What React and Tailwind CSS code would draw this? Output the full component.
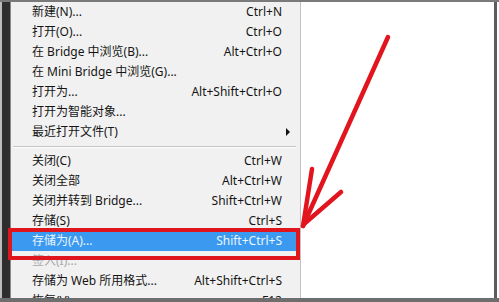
import React from 'react';

const items = [
    { label: '新建(N)...', key: 'Ctrl+N' },
    { label: '打开(O)...', key: 'Ctrl+O' },
    { label: '在 Bridge 中浏览(B)...', key: 'Alt+Ctrl+O' },
    { label: '在 Mini Bridge 中浏览(G)...', key: '' },
    { label: '打开为...', key: 'Alt+Shift+Ctrl+O' },
    { label: '打开为智能对象...', key: '' },
    { label: '最近打开文件(T)', key: '', sub: true },
    { sep: true },
    { label: '关闭(C)', key: 'Ctrl+W' },
    { label: '关闭全部', key: 'Alt+Ctrl+W' },
    { label: '关闭并转到 Bridge...', key: 'Shift+Ctrl+W' },
    { label: '存储(S)', key: 'Ctrl+S' },
    { label: '存储为(A)...', key: 'Shift+Ctrl+S', active: true },
    { label: '签入(I)...', key: '', disabled: true },
    { label: '存储为 Web 所用格式...', key: 'Alt+Shift+Ctrl+S' },
    { label: '恢复(V)', key: 'F12' },
];

const MenuRow = ({ item }) => {
    if (item.sep) {
        return (
            <div className="h-[9px] shrink-0 flex flex-col justify-center pl-[2px] pr-[4px]">
                <div className="h-px bg-[#c4c4c4]" />
                <div className="h-px bg-white" />
            </div>
        );
    }
    const color = item.active ? 'text-[#eaf5ff]' : item.disabled ? 'text-[#a9a9a9]' : 'text-[#151515]';
    return (
        <div
            className={`h-[20px] shrink-0 flex items-center justify-between pl-[21px] pr-[18px] ${item.active ? 'bg-[#3b9af0]' : ''} ${color}`}
        >
            <span>{item.label}</span>
            {item.sub ? (
                <span className="mr-[-8px] w-0 h-0 border-y-[4px] border-y-transparent border-l-[4px] border-l-[#111]" />
            ) : (
                <span>{item.key}</span>
            )}
        </div>
    );
};

export default function App() {
    return (
        <div
            className="relative w-[499px] h-[302px] overflow-hidden bg-white flex flex-col text-[12px]"
            style={{ fontFamily: '"Noto Sans", "Noto Sans CJK SC", sans-serif' }}
        >
            {/* top frame */}
            <div className="h-[2px] shrink-0 bg-[#7a7a7a]" />

            <div className="flex flex-1 min-h-0">
                {/* left frame strips */}
                <div className="w-[2px] bg-[#bdbdbd]" />
                <div className="w-[8px] bg-[#2e2e2e]" />
                <div className="w-[1px] bg-[#8a8a8a]" />

                {/* menu */}
                <div className="w-[289px] bg-[#f1f1f1] flex flex-col overflow-hidden leading-none">
                    {items.map((item, i) => (
                        <MenuRow key={i} item={item} />
                    ))}
                </div>
                <div className="w-px bg-[#c2c2c2]" />

                {/* canvas */}
                <div className="flex-1 bg-white" />

                {/* right frame */}
                <div className="w-[3px] bg-[#5c5c5c]" />
                <div className="w-[2px] bg-white" />
            </div>

            {/* bottom frame */}
            <div className="h-[4px] shrink-0 bg-[#6e6e6e]" />

            {/* red annotation box */}
            <div className="absolute left-[8px] top-[228px] w-[292px] h-[32px] border-[4px] border-[#e0161f]" />

            {/* red arrow */}
            <svg className="absolute inset-0 pointer-events-none" width="499" height="302" viewBox="0 0 499 302">
                <g stroke="#e2141d" strokeWidth="4.5" strokeLinecap="round" fill="none">
                    <path d="M388 37 L303 226" />
                    <path d="M312 169 L303 226" />
                    <path d="M341 192 L304 224" />
                </g>
            </svg>
        </div>
    );
}
